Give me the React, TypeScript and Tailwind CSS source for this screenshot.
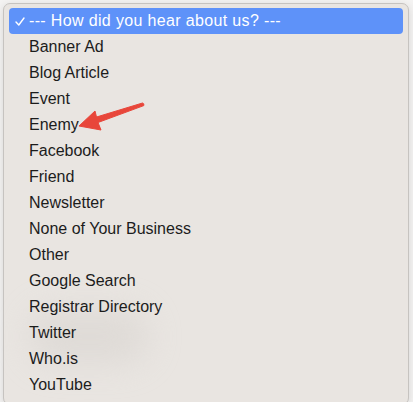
const OPTIONS = [
  'Banner Ad',
  'Blog Article',
  'Event',
  'Enemy',
  'Facebook',
  'Friend',
  'Newsletter',
  'None of Your Business',
  'Other',
  'Google Search',
  'Registrar Directory',
  'Twitter',
  'Who.is',
  'YouTube',
];

export default function App() {
  return (
    <div className="relative h-[402px] w-[413px] overflow-hidden bg-[#f4f3f2] p-[3px] pr-[4px] font-['Liberation_Sans',Arial,sans-serif]">
      <div className="relative h-[402px] rounded-[7px] border border-[#c6c3c0] bg-[#e9e5e1] px-[5px] pt-[4px] shadow-[0_2px_8px_rgba(0,0,0,0.12)]">
        {/* blurred smudge */}
        <div className="absolute left-[25px] top-[305px] h-[55px] w-[120px] rounded-full bg-[#d8d4d0] opacity-60 blur-[16px]" />

        <div className="relative flex h-[26px] items-center rounded-[4px] bg-[#5e92f9] text-[16px] tracking-[0.35px] text-white">
          <svg width="10" height="9" viewBox="0 0 10 9" className="ml-[6px] mr-[4px]">
            <path d="M1 5 L3.8 8 L9 1" fill="none" stroke="white" strokeWidth="1.4" strokeLinecap="round" strokeLinejoin="round" />
          </svg>
          <span>--- How did you hear about us? ---</span>
        </div>

        {OPTIONS.map((o) => (
          <div key={o} className="relative flex h-[26px] items-center pl-[20px] text-[16px] text-[#1c1c1c]">
            {o}
          </div>
        ))}
      </div>

      {/* annotation arrow */}
      <svg className="absolute left-0 top-0" width="413" height="402" viewBox="0 0 413 402">
        <path
          d="M79 126 L95 111 L96.5 117 L142.5 103 Q144.5 103.5 143.8 105.6 L98 122.5 L101 130 Z"
          fill="#e8463a"
          stroke="#e8463a"
          strokeWidth="1"
          strokeLinejoin="round"
        />
      </svg>
    </div>
  );
}
